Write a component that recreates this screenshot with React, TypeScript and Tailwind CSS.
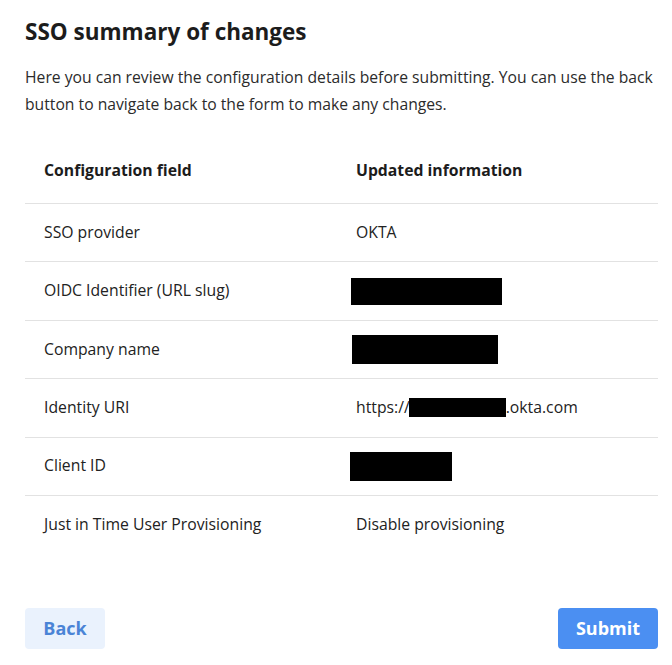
const ROWS: { label: string; value: React.ReactNode }[] = [
  { label: "SSO provider", value: "OKTA" },
  {
    label: "OIDC Identifier (URL slug)",
    value: <div className="h-[27px] w-[151px] -ml-[5px] bg-black" />,
  },
  {
    label: "Company name",
    value: <div className="h-[29px] w-[146px] -ml-[4px] mt-[1px] bg-black" />,
  },
  {
    label: "Identity URI",
    value: (
      <span className="flex items-center">
        https://
        <span className="inline-block h-[19px] w-[97px] -ml-[1px] bg-black" />
        .okta.com
      </span>
    ),
  },
  {
    label: "Client ID",
    value: <div className="h-[29px] w-[102px] -ml-[6px] mt-[1px] bg-black" />,
  },
  { label: "Just in Time User Provisioning", value: "Disable provisioning" },
];

export default function App() {
  return (
    <div className="min-h-screen bg-white pl-[25px] pr-[14px] pt-[16px] text-[#222] [font-family:'Open_Sans',sans-serif]">
      <h1 className="text-[22.5px] font-bold leading-[32px] text-[#1c1c1c]">
        SSO summary of changes
      </h1>
      <p className="mt-[16px] text-[15.7px] leading-[27px] text-[#2b2b2b]">
        Here you can review the configuration details before submitting. You
        can use the back button to navigate back to the form to make any
        changes.
      </p>

      <div className="mt-[27px]">
        <div className="grid h-[58px] grid-cols-[312px_1fr] items-center pb-[6px] text-[15.75px] font-bold text-[#1c1c1c]">
          <div className="pl-[19px]">Configuration field</div>
          <div className="pl-[19px]">Updated information</div>
        </div>
        {ROWS.map((row) => (
          <div
            key={row.label}
            className="grid h-[58.4px] grid-cols-[312px_1fr] items-center border-t border-[#e2e2e2] text-[15.75px]"
          >
            <div className="pl-[19px]">{row.label}</div>
            <div className="pl-[19px]">{row.value}</div>
          </div>
        ))}
      </div>

      <div className="mt-[55px] flex items-center justify-between">
        <button className="h-[41px] w-[80px] rounded-[4px] bg-[#eaf2fd] text-[18px] font-bold text-[#4a84d6]">
          Back
        </button>
        <button className="h-[41px] w-[100px] rounded-[4px] bg-[#4b8ff2] text-[18px] font-bold text-white">
          Submit
        </button>
      </div>
    </div>
  );
}
